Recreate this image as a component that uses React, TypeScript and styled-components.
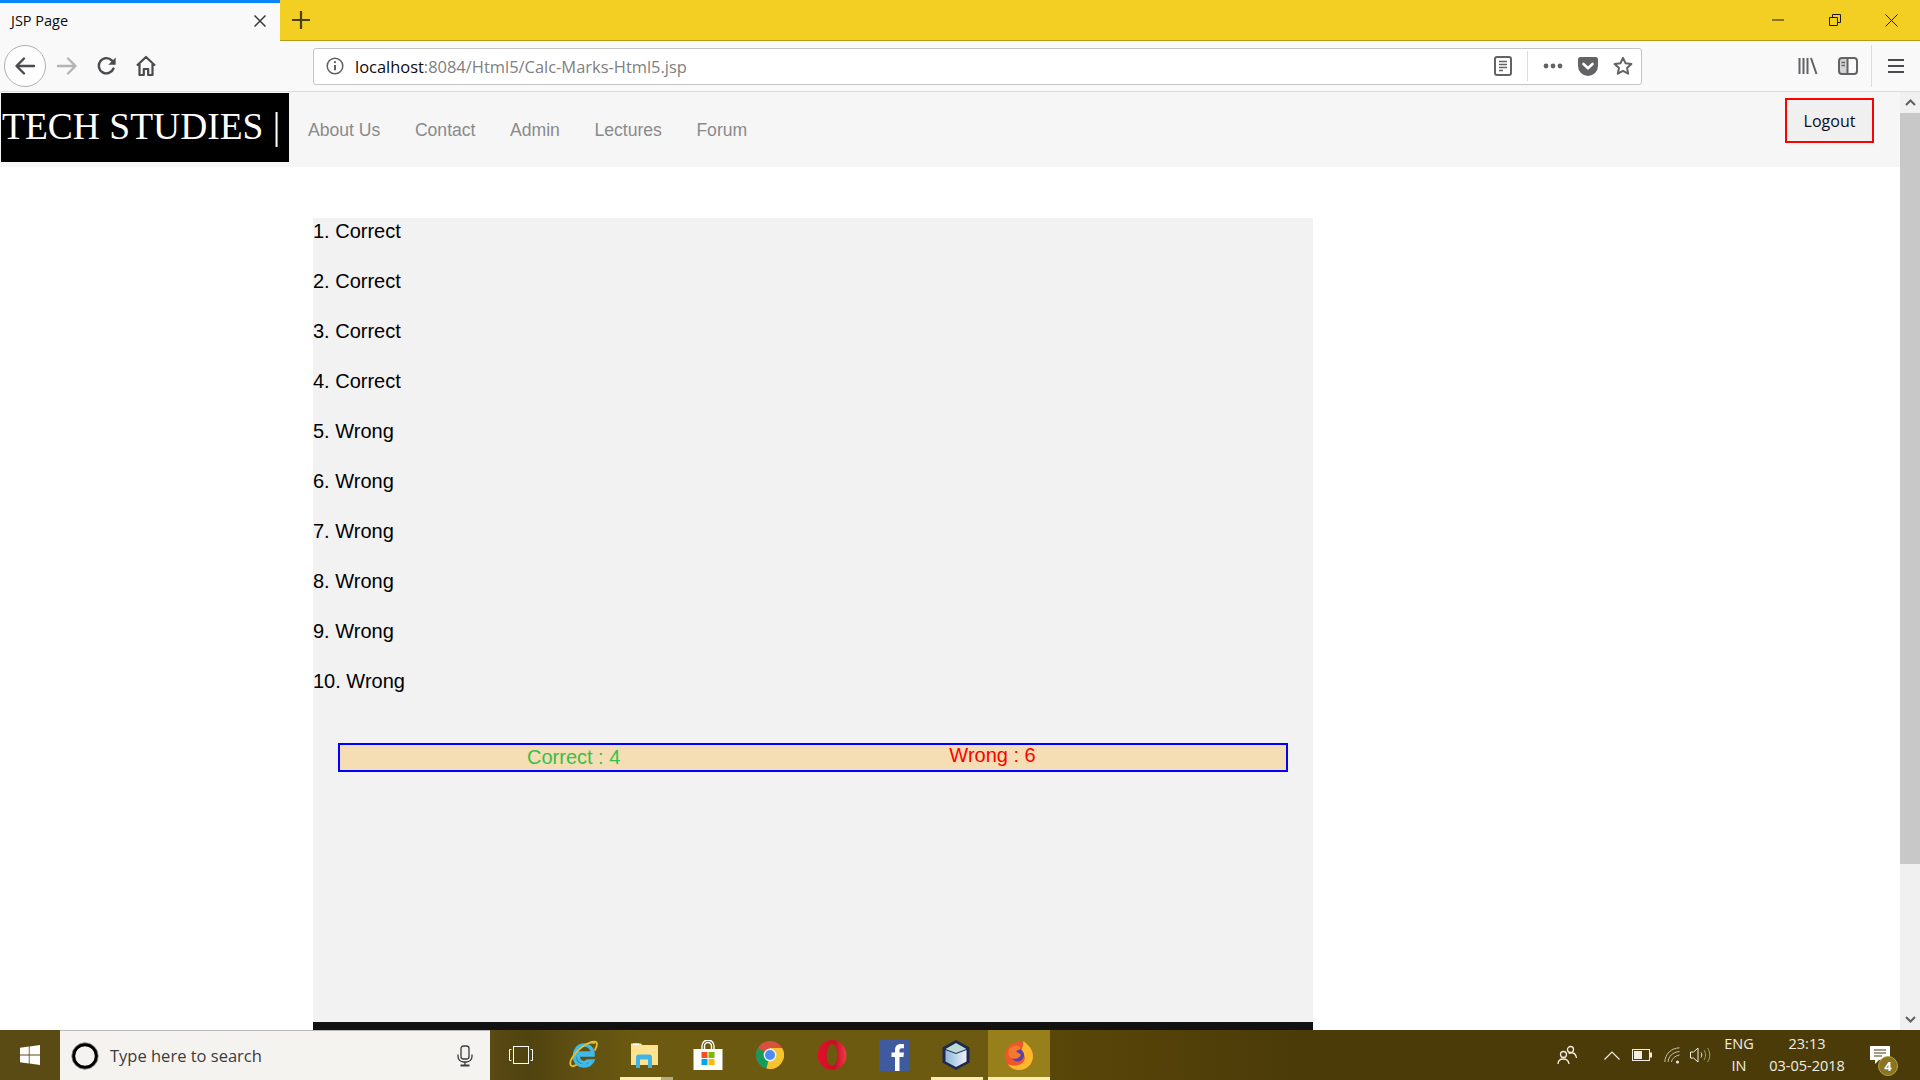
import React from "react";
import styled, { createGlobalStyle } from "styled-components";

const GlobalStyle = createGlobalStyle`
  html, body {
    margin: 0;
    padding: 0;
    background: #fff;
    overflow: hidden;
  }
  * {
    box-sizing: border-box;
  }
`;

const Screen = styled.div`
  width: 1920px;
  height: 1080px;
  display: flex;
  flex-direction: column;
  overflow: hidden;
  font-family: "Liberation Sans", Arial, sans-serif;
`;

/* ---- browser chrome ---- */

const TabStrip = styled.div`
  height: 41px;
  flex: none;
  display: flex;
  align-items: stretch;
  background: #f3cf24;
  border-bottom: 1px solid #b79b12;
`;

const Tab = styled.div`
  width: 280px;
  height: 41px;
  display: flex;
  align-items: center;
  justify-content: space-between;
  padding: 0 14px 3px 11px;
  background: #f9f9fa;
  border-top: 3px solid #0a84ff;
  font: 14.5px "Open Sans", sans-serif;
  color: #0c0c0d;
`;

const NewTab = styled.div`
  width: 42px;
  display: flex;
  align-items: center;
  justify-content: center;
`;

const WindowButtons = styled.div`
  margin-left: auto;
  display: flex;
  align-items: center;
`;

const WindowButton = styled.div`
  width: 57px;
  height: 38px;
  display: flex;
  align-items: center;
  justify-content: center;
`;

const Toolbar = styled.div`
  height: 51px;
  flex: none;
  display: flex;
  align-items: center;
  padding-left: 4px;
  background: #f9f9fa;
  border-bottom: 1px solid #dcdcdc;
`;

const BackButton = styled.div`
  width: 42px;
  height: 42px;
  border-radius: 50%;
  border: 1px solid #b1b1b3;
  background: #fdfdfd;
  display: flex;
  align-items: center;
  justify-content: center;
`;

const IconSlot = styled.div<{ $w?: number }>`
  width: ${(p) => p.$w ?? 40}px;
  height: 36px;
  flex: none;
  display: flex;
  align-items: center;
  justify-content: center;
`;

const UrlBar = styled.div`
  width: 1329px;
  height: 37px;
  margin-left: 148px;
  display: flex;
  align-items: center;
  padding: 0 1px 0 8px;
  background: #fff;
  border: 1px solid #c4c4c4;
  border-radius: 3px;
  font: 16.45px "Open Sans", sans-serif;
  white-space: nowrap;
`;

const Host = styled.span`
  margin-left: 7px;
  color: #0c0c0d;
`;

const UrlRest = styled.span`
  color: #808080;
`;

const UrlActions = styled.div`
  margin-left: auto;
  display: flex;
  align-items: center;
`;

const Divider = styled.div<{ $h: number; $mx: number }>`
  width: 1px;
  height: ${(p) => p.$h}px;
  margin: 0 ${(p) => p.$mx}px;
  background: #dcdcdc;
`;

const ToolbarRight = styled.div`
  margin-left: 146px;
  display: flex;
  align-items: center;
`;

/* ---- page ---- */

const Viewport = styled.div`
  height: 938px;
  flex: none;
  display: flex;
  overflow: hidden;
`;

const Page = styled.div`
  width: 1900px;
  background: #fff;
  display: flex;
  flex-direction: column;
`;

const NavBar = styled.nav`
  height: 75px;
  flex: none;
  display: flex;
  align-items: flex-start;
  padding: 1px 26px 0 1px;
  background: #f6f6f6;
`;

const Logo = styled.div`
  width: 288px;
  height: 69px;
  padding-left: 1px;
  background: #000;
  color: #fff;
  font: 37.5px/68px "Liberation Serif", "Times New Roman", serif;
  white-space: nowrap;
`;

const NavLinks = styled.ul`
  display: flex;
  gap: 34.5px;
  list-style: none;
  margin: 25px 0 0 19px;
  padding: 0;
`;

const NavLink = styled.li`
  font-size: 17.6px;
  line-height: 24px;
  color: #8a8a8a;
`;

const LogoutButton = styled.button`
  width: 89px;
  height: 45px;
  margin: 5px 0 0 auto;
  padding: 0;
  background: #f0f0f0;
  border: 2px solid #ff0000;
  color: #0c0c20;
  font: 16px "Open Sans", sans-serif;
`;

const Content = styled.main`
  width: 1000px;
  flex: 1;
  margin: 51px 0 0 313px;
  padding-top: 1px;
  background: #f2f2f2;
  position: relative;
`;

const Row = styled.p`
  margin: 0 0 26px;
  font-size: 20px;
  line-height: 24px;
  color: #000;
`;

const ScoreBar = styled.div`
  width: 950px;
  height: 29px;
  margin: 50px 0 0 25px;
  display: flex;
  align-items: flex-start;
  background: wheat;
  border: 2px solid #0000ff;
  font-size: 20px;
  line-height: 23px;
`;

const CorrectScore = styled.span`
  margin: 1px 0 0 187px;
  color: #35c04d;
`;

const WrongScore = styled.span`
  margin: -1px 0 0 329px;
  color: #ff0000;
`;

const ContentFooter = styled.div`
  position: absolute;
  left: 0;
  right: 0;
  bottom: 0;
  height: 8px;
  background: #111;
`;

const Scrollbar = styled.div`
  width: 20px;
  flex: none;
  display: flex;
  flex-direction: column;
  background: #f0f0f0;
`;

const ScrollArrow = styled.div`
  height: 21px;
  flex: none;
  display: flex;
  align-items: center;
  justify-content: center;
`;

const ScrollThumb = styled.div`
  height: 751px;
  flex: none;
  background: #c8c8c8;
`;

const ScrollTrack = styled.div`
  flex: 1;
`;

/* ---- taskbar ---- */

const Taskbar = styled.footer`
  height: 50px;
  flex: none;
  display: flex;
  align-items: stretch;
  color: #fff;
  background: linear-gradient(
    90deg,
    #5a4a14 0,
    #5a4a14 490px,
    #50430f 530px,
    #5f4f12 575px,
    #6b5a10 640px,
    #6b5a10 987px,
    #594608 1049px,
    #4b3b08 1300px,
    #4b3b08 1920px
  );
`;

const StartButton = styled.div`
  width: 60px;
  display: flex;
  align-items: center;
  justify-content: center;
`;

const SearchBox = styled.div`
  width: 430px;
  display: flex;
  align-items: center;
  padding: 0 17px 0 11px;
  background: #f4f3f0;
  border-top: 1px solid #b9b9b9;
  color: #3c3c3c;
  font: 16.5px "Open Sans", sans-serif;
`;

const SearchLabel = styled.span`
  margin-left: 11px;
`;

const MicSlot = styled.div`
  margin-left: auto;
  display: flex;
`;

const TaskTile = styled.div<{ $active?: boolean }>`
  width: 62.2px;
  display: flex;
  align-items: center;
  justify-content: center;
  position: relative;
  background: ${(p) => (p.$active ? "#97801c" : "transparent")};
`;

const RunningMark = styled.span<{ $left: number; $right: number; $stacked?: boolean }>`
  position: absolute;
  bottom: 0;
  left: ${(p) => p.$left}px;
  right: ${(p) => p.$right}px;
  height: 3px;
  background: ${(p) =>
    p.$stacked
      ? "linear-gradient(90deg, #fdeeb0 0, #fdeeb0 78%, #b8ad80 78%)"
      : "#fdeeb0"};
`;

const Tray = styled.div`
  margin-left: auto;
  display: flex;
  align-items: center;
  padding-right: 10px;
  font: 14.5px/22px "Open Sans", sans-serif;
  color: #f2efe2;
`;

const TraySlot = styled.div<{ $w: number }>`
  width: ${(p) => p.$w}px;
  display: flex;
  align-items: center;
  justify-content: center;
`;

const TrayText = styled.div<{ $w: number }>`
  width: ${(p) => p.$w}px;
  text-align: center;
`;

const NotifySlot = styled.div`
  width: 60px;
  height: 50px;
  display: flex;
  align-items: center;
  justify-content: center;
  position: relative;
`;

const NotifyBadge = styled.div`
  position: absolute;
  left: 28px;
  top: 26px;
  width: 20px;
  height: 20px;
  border-radius: 50%;
  background: #8a7420;
  border: 1px solid #b7a24a;
  color: #fff;
  font: bold 13px/18px "Open Sans", sans-serif;
  text-align: center;
`;

/* ---- icons ---- */

const Ink = "#4a4a4f";
const Grey = "#636366";

const BackIcon = () => (
  <svg width="22" height="20" viewBox="0 0 22 20" fill="none" stroke={Ink} strokeWidth="2.4" strokeLinecap="round" strokeLinejoin="round">
    <path d="M20 10H3M10 2.5L2.5 10l7.5 7.5" />
  </svg>
);

const ForwardIcon = () => (
  <svg width="22" height="20" viewBox="0 0 22 20" fill="none" stroke="#b4b4b6" strokeWidth="2.4" strokeLinecap="round" strokeLinejoin="round">
    <path d="M2 10h17M12 2.5l7.5 7.5-7.5 7.5" />
  </svg>
);

const ReloadIcon = () => (
  <svg width="20" height="20" viewBox="0 0 20 20" fill="none">
    <path d="M16.5 12.5A7.6 7.6 0 1 1 15 4.6" stroke={Ink} strokeWidth="2.4" strokeLinecap="round" />
    <path d="M18.6 1.5v7.2h-7.2z" fill={Ink} />
  </svg>
);

const HomeIcon = () => (
  <svg width="22" height="22" viewBox="0 0 22 22" fill="none" stroke={Ink} strokeWidth="2.2" strokeLinejoin="round">
    <path d="M2 10.5L11 2l9 8.5M4.5 9v11h4.3v-6h4.4v6h4.3V9" />
  </svg>
);

const InfoIcon = () => (
  <svg width="18" height="18" viewBox="0 0 18 18" fill="none" stroke="#5f5f63" strokeWidth="1.5">
    <circle cx="9" cy="9" r="7.8" />
    <path d="M9 8v5.2" strokeWidth="2" />
    <circle cx="9" cy="5.2" r="1.1" fill="#5f5f63" stroke="none" />
  </svg>
);

const ReaderIcon = () => (
  <svg width="18" height="20" viewBox="0 0 18 20" fill="none">
    <rect x="1" y="1" width="16" height="18" rx="2" stroke={Grey} strokeWidth="2" />
    <path d="M5 5.5h8M5 8.5h8M5 11.5h8M5 14.5h4" stroke={Grey} strokeWidth="1.5" />
  </svg>
);

const DotsIcon = () => (
  <svg width="20" height="6" viewBox="0 0 20 6" fill={Grey}>
    <circle cx="3" cy="3" r="2.4" />
    <circle cx="10" cy="3" r="2.4" />
    <circle cx="17" cy="3" r="2.4" />
  </svg>
);

const PocketIcon = () => (
  <svg width="20" height="19" viewBox="0 0 20 19">
    <path d="M2.5 0h15A2.5 2.5 0 0 1 20 2.500V9A10 10 0 0 1 0 9V2.500A2.500 2.500 0 0 1 2.500 0z" fill={Grey} />
    <path d="M5.500 7L10 11.300 14.500 7" fill="none" stroke="#fff" strokeWidth="2.600" strokeLinecap="round" strokeLinejoin="round" />
  </svg>
);

const StarIcon = () => (
  <svg width="20" height="20" viewBox="0 0 20 20" fill="none" stroke={Grey} strokeWidth="2" strokeLinejoin="round">
    <path d="M10 1.800l2.500 5.400 5.900.7-4.400 4 1.200 5.800L10 14.800l-5.200 2.900L6 11.900l-4.400-4 5.900-.7z" />
  </svg>
);

const LibraryIcon = () => (
  <svg width="20" height="18" viewBox="0 0 20 18" stroke={Grey} strokeWidth="2" fill="none">
    <path d="M1.500 1v16M5.500 1v16M9.500 1v16M13 1l5.500 16" />
  </svg>
);

const SidebarIcon = () => (
  <svg width="20" height="18" viewBox="0 0 20 18" fill="none">
    <rect x="1" y="1" width="18" height="16" rx="3" stroke={Grey} strokeWidth="2" />
    <rect x="2" y="2" width="7" height="14" fill={Grey} opacity="0.25" />
    <path d="M9.500 1v16" stroke={Grey} strokeWidth="2" />
    <path d="M3.500 5.500h3.500M3.500 8.500h3.500" stroke={Grey} strokeWidth="1.500" />
  </svg>
);

const MenuIcon = () => (
  <svg width="16" height="14" viewBox="0 0 16 14" stroke={Ink} strokeWidth="2">
    <path d="M0 1h16M0 7h16M0 13h16" />
  </svg>
);

const CloseTabIcon = () => (
  <svg width="12" height="12" viewBox="0 0 12 12" stroke="#3a3a3c" strokeWidth="1.500">
    <path d="M.5.500l11 11M11.500.500l-11 11" />
  </svg>
);

const PlusIcon = () => (
  <svg width="18" height="18" viewBox="0 0 18 18" stroke="#4a400c" strokeWidth="2.200">
    <path d="M9 0v18M0 9h18" />
  </svg>
);

const MinIcon = () => (
  <svg width="12" height="2" viewBox="0 0 12 2" stroke="#1a1a1a" strokeWidth="1">
    <path d="M0 1h12" />
  </svg>
);

const RestoreIcon = () => (
  <svg width="12" height="12" viewBox="0 0 12 12" fill="none" stroke="#1a1a1a" strokeWidth="1">
    <path d="M.5 3.500h8v8h-8zM3.500 3.500v-3h8v8h-3" />
  </svg>
);

const WinCloseIcon = () => (
  <svg width="13" height="13" viewBox="0 0 13 13" stroke="#1a1a1a" strokeWidth="1">
    <path d="M.5.500l12 12M12.500.500l-12 12" />
  </svg>
);

const ChevronUp = () => (
  <svg width="11" height="7" viewBox="0 0 11 7" fill="none" stroke="#5f5f5f" strokeWidth="2">
    <path d="M1 6l4.500-4.500L10 6" />
  </svg>
);

const ChevronDown = () => (
  <svg width="11" height="7" viewBox="0 0 11 7" fill="none" stroke="#5f5f5f" strokeWidth="2">
    <path d="M1 1l4.500 4.500L10 1" />
  </svg>
);

const WindowsLogo = () => (
  <svg width="20" height="20" viewBox="0 0 20 20" fill="#fff">
    <path d="M0 2.800L8.800 1.600v8H0zM9.600 1.500L20 0v9.600H9.600zM0 10.400h8.800v8L0 17.200zM9.600 10.400H20V20L9.600 18.500z" />
  </svg>
);

const CortanaRing = () => (
  <svg width="28" height="28" viewBox="0 0 28 28" fill="none">
    <circle cx="14" cy="14" r="11.500" stroke="#000" strokeWidth="3.400" />
    <circle cx="14" cy="14" r="13.200" stroke="#8a8a8a" strokeWidth="0.800" />
  </svg>
);

const MicIcon = () => (
  <svg width="16" height="22" viewBox="0 0 16 22" fill="none" stroke="#3c3c3c" strokeWidth="1.300">
    <rect x="4" y="1" width="8" height="13" rx="2.500" />
    <path d="M1 9.500v2A5.500 5.500 0 0 0 6.500 17h3a5.500 5.500 0 0 0 5.500-5.500v-2M8 17v3" />
    <path d="M3.500 20.500h9" strokeWidth="2" />
  </svg>
);

const TaskViewIcon = () => (
  <svg width="24" height="18" viewBox="0 0 24 18" fill="none" stroke="#fff" strokeWidth="1">
    <rect x="4.500" y=".5" width="15" height="17" />
    <path d="M2.500 3.500h-2v11h2M21.500 3.500h2v11h-2" />
  </svg>
);

const IEIcon = () => (
  <svg width="30" height="30" viewBox="0 0 30 30" fill="none">
    <path d="M8 15h17c.4-6-4-10-9-10S6.500 9 6.500 16s4.500 10 9.500 10c4 0 7-2 8.500-5h-5c-1 1-2 1.500-3.500 1.500-3 0-5.500-2.500-5.500-5.500V13h14" stroke="#3fb8ea" strokeWidth="3.500" />
    <path d="M26 3C20 1 8 10 3 20c-2 5 .5 8 5 5M21 3c4-2 8-2 8 1 0 2-1 4-2 6" stroke="#e6c229" strokeWidth="1.800" strokeLinecap="round" />
  </svg>
);

const ExplorerIcon = () => (
  <svg width="28" height="26" viewBox="0 0 28 26">
    <path d="M0 1.500h10l2 2.500H0z" fill="#ffe79a" />
    <rect x="2" y="1.500" width="6" height="2" fill="#fff" />
    <path d="M0 3h27v20H0z" fill="#fde390" />
    <path d="M5 26V15.500q0-3 3-3h10q3 0 3 3V26h-4v-8.500H9V26z" fill="#3fb4e6" />
  </svg>
);

const StoreIcon = () => (
  <svg width="30" height="30" viewBox="0 0 30 30" fill="none">
    <path d="M9 9V6a6 6 0 0 1 12 0v3M11.500 9V6a3.500 3.500 0 0 1 7 0v3" stroke="#fff" strokeWidth="1.400" />
    <rect x="0.500" y="9" width="29" height="21" fill="#fff" />
    <rect x="8.500" y="12" width="6" height="6" fill="#f25022" />
    <rect x="15.500" y="12" width="6" height="6" fill="#7fba00" />
    <rect x="8.500" y="19" width="6" height="6" fill="#00a4ef" />
    <rect x="15.500" y="19" width="6" height="6" fill="#ffb900" />
  </svg>
);

const ChromeIcon = () => (
  <svg width="28" height="28" viewBox="0 0 28 28">
    <circle cx="14" cy="14" r="14" fill="#d8503f" />
    <path d="M14 14L1.900 7a14 14 0 0 0 8.500 20.500z" fill="#159c5b" />
    <path d="M14 14l-3.600 13.500A14 14 0 0 0 26.100 7H14z" fill="#f6c42d" />
    <circle cx="14" cy="14" r="6.400" fill="#f0f0f0" />
    <circle cx="14" cy="14" r="5" fill="#4c8bf5" />
  </svg>
);

const OperaIcon = () => (
  <svg width="30" height="30" viewBox="0 0 30 30">
    <defs>
      <linearGradient id="operaRed" x1="0" y1="0" x2="1" y2="0">
        <stop offset="0" stopColor="#e5102a" />
        <stop offset="0.6" stopColor="#c50e22" />
        <stop offset="1" stopColor="#f23a48" />
      </linearGradient>
    </defs>
    <ellipse cx="15" cy="15" rx="14.500" ry="15" fill="url(#operaRed)" />
    <ellipse cx="15" cy="15" rx="5.500" ry="11" fill="#6b5a10" />
  </svg>
);

const FacebookIcon = () => (
  <svg width="31" height="31" viewBox="0 0 31 31">
    <rect width="31" height="31" fill="#3f5a9e" />
    <path d="M16 31V17h-3.500v-4.500H16V10c0-4 2.400-6 6-6 1.500 0 2.800.1 3 .2v4h-2.200c-1.800 0-2.300.9-2.300 2.200v2.100H25l-.6 4.500h-3.900v14z" fill="#fff" />
  </svg>
);

const BoxIcon = () => (
  <svg width="30" height="32" viewBox="0 0 30 32">
    <defs>
      <linearGradient id="boxFace" x1="0" y1="0" x2="1" y2="0">
        <stop offset="0" stopColor="#8fb6dc" />
        <stop offset="1" stopColor="#eef3f6" />
      </linearGradient>
    </defs>
    <path d="M15 1l13.500 7.500v15L15 31 1.500 23.500v-15z" fill="#20264f" />
    <path d="M15 4l10.500 6L15 14 4.500 10z" fill="#b9dcd8" />
    <path d="M4.500 11L15 15l10.500-4v11.500L15 28 4.500 22.500z" fill="url(#boxFace)" />
  </svg>
);

const FirefoxIcon = () => (
  <svg width="28" height="30" viewBox="0 0 28 30">
    <circle cx="14" cy="16" r="14" fill="#f0562c" />
    <path d="M18 1c6 4 10 9 10 15 0 8-6 14-14 14-5 0-9-2-11-6 5 3 13 2 16-3 2-4 0-8-3-10 1-3 3-6 2-10z" fill="#fdb82c" />
    <circle cx="12.500" cy="15" r="6.500" fill="#5c3fa8" />
    <path d="M4 9c3-3 7-4 10-3 2 1 1 3 0 4l-3 1c1 2 4 2 5 4-2 4-8 5-11 2C3 15 3 12 4 9z" fill="#f4792c" />
  </svg>
);

const PeopleIcon = () => (
  <svg width="20" height="20" viewBox="0 0 20 20" fill="none" stroke="#f2efe2" strokeWidth="1.300">
    <circle cx="13.500" cy="4.500" r="3" />
    <circle cx="6.500" cy="9.500" r="3" />
    <path d="M1 19c0-3 2-5 5.500-5s5 2 5.500 5M12 9c.5-1 3-1.500 4-1 2 .5 3 2 3.500 5" />
  </svg>
);

const TrayChevron = () => (
  <svg width="16" height="9" viewBox="0 0 16 9" fill="none" stroke="#f2efe2" strokeWidth="1.200">
    <path d="M.5 8.500L8 1l7.500 7.500" />
  </svg>
);

const BatteryIcon = () => (
  <svg width="20" height="12" viewBox="0 0 20 12" fill="none">
    <rect x=".5" y=".5" width="17" height="11" stroke="#f2efe2" />
    <rect x="2" y="2" width="8" height="8" fill="#f2efe2" />
    <rect x="18" y="3.500" width="2" height="5" fill="#f2efe2" />
  </svg>
);

const WifiIcon = () => (
  <svg width="17" height="17" viewBox="0 0 17 17" fill="none" stroke="#c8c2aa" strokeWidth="1">
    <path d="M.8 15C1.200 7 7 1.200 15.500 .8M4 15c.4-5.500 4.500-9.800 11.500-10.500M7.500 15c.3-3 3-6 8-7" />
    <circle cx="13.500" cy="15" r="1.500" fill="#f2efe2" stroke="none" />
  </svg>
);

const VolumeIcon = () => (
  <svg width="21" height="16" viewBox="0 0 21 16" fill="none" stroke="#f2efe2" strokeWidth="1">
    <path d="M.5 5h3L8 1v14l-4.500-4h-3z" />
    <path d="M11 5.500c1 1.500 1 3.500 0 5" />
    <path d="M14 3c2 3 2 7 0 10M17.500 1c3 4 3 10 0 14" stroke="#a79f7e" />
  </svg>
);

const NotifyIcon = () => (
  <svg width="20" height="18" viewBox="0 0 20 18">
    <path d="M0 0h20v14H9l-4 4v-4H0z" fill="#fff" />
    <path d="M4 4h12M4 7h12M4 10h8" stroke="#4b3b08" strokeWidth="1" />
  </svg>
);

const rows = [
  "1. Correct",
  "2. Correct",
  "3. Correct",
  "4. Correct",
  "5. Wrong",
  "6. Wrong",
  "7. Wrong",
  "8. Wrong",
  "9. Wrong",
  "10. Wrong",
];

const navItems = ["About Us", "Contact", "Admin", "Lectures", "Forum"];

export default function App() {
  return (
    <Screen>
      <GlobalStyle />
      <TabStrip>
        <Tab>
          <span>JSP Page</span>
          <CloseTabIcon />
        </Tab>
        <NewTab>
          <PlusIcon />
        </NewTab>
        <WindowButtons>
          <WindowButton>
            <MinIcon />
          </WindowButton>
          <WindowButton>
            <RestoreIcon />
          </WindowButton>
          <WindowButton>
            <WinCloseIcon />
          </WindowButton>
        </WindowButtons>
      </TabStrip>

      <Toolbar>
        <BackButton>
          <BackIcon />
        </BackButton>
        <IconSlot $w={41}>
          <ForwardIcon />
        </IconSlot>
        <IconSlot>
          <ReloadIcon />
        </IconSlot>
        <IconSlot $w={38}>
          <HomeIcon />
        </IconSlot>
        <UrlBar>
          <IconSlot $w={26}>
            <InfoIcon />
          </IconSlot>
          <Host>
            localhost<UrlRest>:8084/Html5/Calc-Marks-Html5.jsp</UrlRest>
          </Host>
          <UrlActions>
            <IconSlot $w={33}>
              <ReaderIcon />
            </IconSlot>
            <Divider $h={30} $mx={8} />
            <IconSlot $w={34}>
              <DotsIcon />
            </IconSlot>
            <IconSlot $w={35}>
              <PocketIcon />
            </IconSlot>
            <IconSlot $w={35}>
              <StarIcon />
            </IconSlot>
          </UrlActions>
        </UrlBar>
        <ToolbarRight>
          <IconSlot>
            <LibraryIcon />
          </IconSlot>
          <IconSlot>
            <SidebarIcon />
          </IconSlot>
          <Divider $h={42} $mx={3} />
          <IconSlot $w={42}>
            <MenuIcon />
          </IconSlot>
        </ToolbarRight>
      </Toolbar>

      <Viewport>
        <Page>
          <NavBar>
            <Logo>TECH STUDIES |</Logo>
            <NavLinks>
              {navItems.map((item) => (
                <NavLink key={item}>{item}</NavLink>
              ))}
            </NavLinks>
            <LogoutButton>Logout</LogoutButton>
          </NavBar>
          <Content>
            {rows.map((row) => (
              <Row key={row}>{row}</Row>
            ))}
            <ScoreBar>
              <CorrectScore>Correct : 4</CorrectScore>
              <WrongScore>Wrong : 6</WrongScore>
            </ScoreBar>
            <ContentFooter />
          </Content>
        </Page>
        <Scrollbar>
          <ScrollArrow>
            <ChevronUp />
          </ScrollArrow>
          <ScrollThumb />
          <ScrollTrack />
          <ScrollArrow>
            <ChevronDown />
          </ScrollArrow>
        </Scrollbar>
      </Viewport>

      <Taskbar>
        <StartButton>
          <WindowsLogo />
        </StartButton>
        <SearchBox>
          <CortanaRing />
          <SearchLabel>Type here to search</SearchLabel>
          <MicSlot>
            <MicIcon />
          </MicSlot>
        </SearchBox>
        <TaskTile>
          <TaskViewIcon />
        </TaskTile>
        <TaskTile>
          <IEIcon />
        </TaskTile>
        <TaskTile>
          <ExplorerIcon />
          <RunningMark $left={6} $right={4} $stacked />
        </TaskTile>
        <TaskTile>
          <StoreIcon />
        </TaskTile>
        <TaskTile>
          <ChromeIcon />
        </TaskTile>
        <TaskTile>
          <OperaIcon />
        </TaskTile>
        <TaskTile>
          <FacebookIcon />
        </TaskTile>
        <TaskTile>
          <BoxIcon />
          <RunningMark $left={6} $right={5} />
        </TaskTile>
        <TaskTile $active>
          <FirefoxIcon />
          <RunningMark $left={0} $right={0} />
        </TaskTile>
        <Tray>
          <TraySlot $w={62}>
            <PeopleIcon />
          </TraySlot>
          <TraySlot $w={28}>
            <TrayChevron />
          </TraySlot>
          <TraySlot $w={32}>
            <BatteryIcon />
          </TraySlot>
          <TraySlot $w={28}>
            <WifiIcon />
          </TraySlot>
          <TraySlot $w={28}>
            <VolumeIcon />
          </TraySlot>
          <TrayText $w={50}>
            ENG
            <br />
            IN
          </TrayText>
          <TrayText $w={86}>
            23:13
            <br />
            03-05-2018
          </TrayText>
          <NotifySlot>
            <NotifyIcon />
            <NotifyBadge>4</NotifyBadge>
          </NotifySlot>
        </Tray>
      </Taskbar>
    </Screen>
  );
}
